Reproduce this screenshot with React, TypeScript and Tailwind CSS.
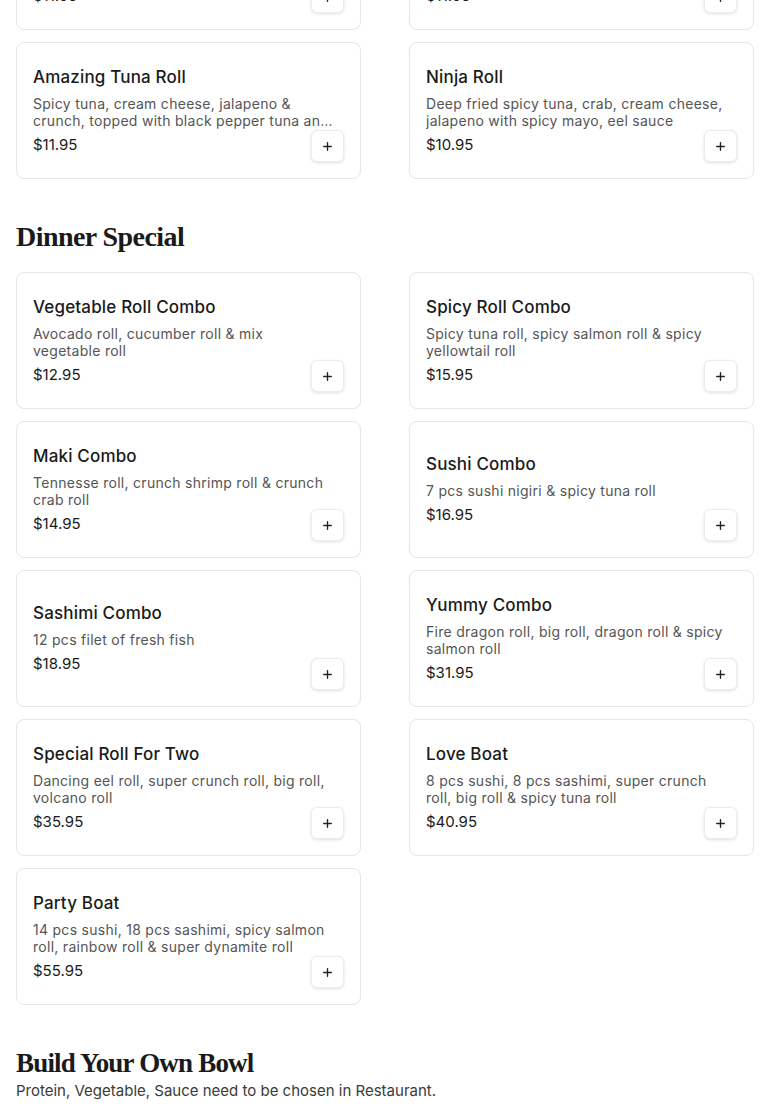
import { Plus } from 'lucide-react';

interface Item {
  name: string;
  desc: string;
  price: string;
}

const prevRow: Item[] = [
  { name: 'Crunch Roll', desc: 'Shrimp tempura, crab, avocado, cucumber, topped with crunch and eel sauce', price: '$11.95' },
  { name: 'Spider Roll', desc: 'Soft shell crab, avocado, cucumber, masago with eel sauce and spicy mayo', price: '$11.95' },
];

const rolls: Item[] = [
  { name: 'Amazing Tuna Roll', desc: 'Spicy tuna, cream cheese, jalapeno & crunch, topped with black pepper tuna and spicy mayo', price: '$11.95' },
  { name: 'Ninja Roll', desc: 'Deep fried spicy tuna, crab, cream cheese, jalapeno with spicy mayo, eel sauce', price: '$10.95' },
];

const dinner: Item[] = [
  { name: 'Vegetable Roll Combo', desc: 'Avocado roll, cucumber roll & mix vegetable roll', price: '$12.95' },
  { name: 'Spicy Roll Combo', desc: 'Spicy tuna roll, spicy salmon roll & spicy yellowtail roll', price: '$15.95' },
  { name: 'Maki Combo', desc: 'Tennesse roll, crunch shrimp roll & crunch crab roll', price: '$14.95' },
  { name: 'Sushi Combo', desc: '7 pcs sushi nigiri & spicy tuna roll', price: '$16.95' },
  { name: 'Sashimi Combo', desc: '12 pcs filet of fresh fish', price: '$18.95' },
  { name: 'Yummy Combo', desc: 'Fire dragon roll, big roll, dragon roll & spicy salmon roll', price: '$31.95' },
  { name: 'Special Roll For Two', desc: 'Dancing eel roll, super crunch roll, big roll, volcano roll', price: '$35.95' },
  { name: 'Love Boat', desc: '8 pcs sushi, 8 pcs sashimi, super crunch roll, big roll & spicy tuna roll', price: '$40.95' },
  { name: 'Party Boat', desc: '14 pcs sushi, 18 pcs sashimi, spicy salmon roll, rainbow roll & super dynamite roll', price: '$55.95' },
];

function MenuCard({ item }: { item: Item }) {
  return (
    <div className="grid h-[137px] rounded-lg border border-[#e6e6e6] bg-white p-4">
      <div className="[grid-area:1/1] self-center pr-[11px]">
        <h3 className="text-[17px] font-medium leading-6 tracking-[0.01em] text-[#1a1a1a]">{item.name}</h3>
        <p className="mt-1.5 line-clamp-2 text-[14px] leading-[17px] tracking-[0.02em] text-[#555]">{item.desc}</p>
        <div className="mt-1 text-[15px] leading-6 text-[#1a1a1a]">{item.price}</div>
      </div>
      <button className="[grid-area:1/1] flex h-8 w-[33px] items-center justify-center self-end justify-self-end rounded-md border border-[#ececec] bg-white shadow-[0_1px_3px_rgba(0,0,0,0.12)]">
        <Plus size={13} strokeWidth={2.5} className="text-[#222]" />
      </button>
    </div>
  );
}

function Grid({ items }: { items: Item[] }) {
  return (
    <div className="grid grid-cols-2 gap-x-12 gap-y-3">
      {items.map((it) => (
        <MenuCard key={it.name} item={it} />
      ))}
    </div>
  );
}

export default function App() {
  return (
    <div className="h-[1119px] w-full overflow-hidden bg-white font-['Inter',sans-serif]">
      <div className="-mt-[107px] px-4">
        <Grid items={[...prevRow, ...rolls]} />

        <h2 className="mt-10 mb-[17px] font-['Liberation_Serif',serif] text-[28px] font-bold leading-9 tracking-[-0.02em] text-[#1a1a1a]">
          Dinner Special
        </h2>
        <Grid items={dinner} />

        <h2 className="mt-10 font-['Liberation_Serif',serif] text-[27px] font-bold leading-9 tracking-[-0.03em] text-[#1a1a1a]">
          Build Your Own Bowl
        </h2>
        <p className="text-[15px] leading-5 text-[#3a3a3a]">Protein, Vegetable, Sauce need to be chosen in Restaurant.</p>
      </div>
    </div>
  );
}
